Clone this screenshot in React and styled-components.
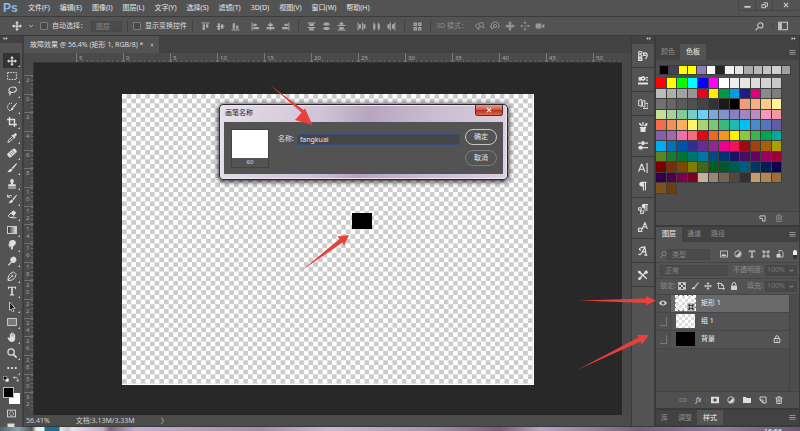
import React, { useState } from 'react'
import styled, { createGlobalStyle, css } from 'styled-components'

const GlobalStyle = createGlobalStyle`
	*, *::before, *::after {
		box-sizing: border-box;}

	body {
		margin: 0;
		background: #282828;
		color: #dcdcdc;
		font-family: 'Noto Sans', 'Noto Sans CJK SC', sans-serif;
		font-size: 7px;
		line-height: 10px;}

	button, input, select {
		font: inherit;
		color: inherit;
		margin: 0;
		padding: 0;
		border: 0;
		background: none;}
`;

/* ---------- Icons ---------- */

const line = { fill: 'none', stroke: 'currentColor', strokeWidth: 1.6 };

const icons = {
	move: <path d='M8 0l3 3.5H9V7h3.500V5L16 8l-3.500 3V9H9v3.500h2L8 16l-3-3.500h2V9H3.500v2L0 8l3.500-3v2H7V3.500H5z' />,
	marquee: <rect x='1' y='2.500' width='14' height='11' {...line} strokeDasharray='2.500 1.800' />,
	lasso: <g {...line}><ellipse cx='9' cy='6' rx='6' ry='4.300' transform='rotate(-12 9 6)' /><circle cx='4.500' cy='10.500' r='1.700' /><path d='M5 12c1 1 .5 2.500-1.500 3' /></g>,
	quickSelect: <g><path d='M8 2C4 1 1 4 1 8s2 6 5 6' {...line} strokeDasharray='2 1.300' /><path d='M15.500 1l.5 1-5 7-2-1.500zM8.500 8.200l2 1.800c-.5 2.500-2.500 4-5.500 3.500 1.500-1 1.500-4 3.500-5.300z' /></g>,
	crop: <path d='M4 0v12h12M0 4h12v12' {...line} strokeWidth='2.200' />,
	eyedropper: <g><path d='M12 1c2-2 5 1 3 3l-2.500 2.500 1 1-1.500 1.500-5-5L8.500 2.500l1 1z' /><path d='M8 6l-5.500 5.500L1.500 15l3-1L10 8.300' {...line} /></g>,
	heal: <g transform='rotate(-40 8 8)'><rect x='0' y='4' width='16' height='8' rx='3' /><path d='M5 4v8M11 4v8M7 7h2M7 9h2' stroke='#535353' fill='none' /></g>,
	brush: <path d='M15 0l1 1-6.500 9L7.500 8zM6.800 8.800l2 2c-.5 3-4 4.500-8.300 3.700 2-1 2.500-5 6.300-5.700z' />,
	stamp: <path d='M8 0a3 3 0 0 1 3 3c0 2-1.500 3-1.500 5.500H14V12H2V8.500h4.500C6.500 6 5 5 5 3a3 3 0 0 1 3-3zM1.500 13.500h13V15h-13z' />,
	historyBrush: <g><path d='M15 1l1 1-5.500 8-2-2zM7.800 8.800l2 2c-.5 3-3.500 4.500-7.300 3.700 2-1 2-5 5.300-5.700z' /><path d='M1 1v4h4M1.500 4.500C4 2 6 2 8 3.500' {...line} /></g>,
	eraser: <g><path d='M10 2l5 4-4 4.500-5-4z' /><path d='M6 6.500l5 4-2.500 3H4.500L2 11z' {...line} /><path d='M8 14h7' {...line} /></g>,
	smudge: <path d='M5 1c3-1.500 8-1 9 2s-1 6-4 7l-1 5H6l1-5-3 2-1-1 2-3-3 1V7l3-1.500L3 5l.5-2z' />,
	dodge: <path d='M10 1a5 5 0 1 1-2.500 9.300L3 15.500 1.500 14 6.300 9A5 5 0 0 1 10 1z' />,
	pen: <g><path d='M10 1l5 5-1.500 1.500c0 4-3 6-7.500 7.500H1.500L2 10c1-4 3-6.500 7-7.500z' {...line} /><path d='M2 14.500L7.500 8.500' {...line} /><circle cx='8.500' cy='7.500' r='1.500' /></g>,
	type: <path d='M1.500 1h13v4h-1.300c-.2-1.500-.7-2.200-2.200-2.200H9.300V13l2.200.7V15h-7v-1.300l2.200-.7V2.800H5C3.500 2.800 3 3.500 2.800 5H1.500z' />,
	select: <g><path d='M4 0l9 10H9l2 5-2.500 1-2-5L4 13z' fill='#111' stroke='currentColor' strokeWidth='1.300' /></g>,
	rect: <rect x='1' y='2.500' width='14' height='11' fill='#777' stroke='currentColor' strokeWidth='1.300' />,
	hand: <path d='M4.500 9V3.500c0-1.300 1.700-1.300 1.700 0V7h.5V1.500c0-1.500 1.800-1.500 1.800 0V7H9V2c0-1.400 1.800-1.400 1.800 0v5.500h.5V4c0-1.300 1.700-1.300 1.700 0v6c0 4-2 6-5 6-3.500 0-4.500-2-7-6-.6-1.300.8-2 1.700-1z' />,
	zoom: <g {...line} strokeWidth='2'><circle cx='6.500' cy='6.500' r='5' /><path d='M10 10l5.500 5.500' strokeWidth='2.800' /></g>,
	more: <g><circle cx='2' cy='8' r='1.800' /><circle cx='8' cy='8' r='1.800' /><circle cx='14' cy='8' r='1.800' /></g>,
	mask: <g><rect x='1' y='2' width='14' height='12' {...line} /><circle cx='8' cy='8' r='3.500' {...line} strokeDasharray='2 1' /></g>,
	screen: <path d='M1 1h14v9H1z' />,
	alignTop: <path d='M1 1h14v1.800H1zM3 4h4v10H3zM9 4h4v6H9z' />,
	alignMid: <path d='M3 2h4v5h2V4h4v3h2v1.800h-2V12H9V8.800H7V14H3V8.800H1V7h2z' />,
	alignBottom: <path d='M3 2h4v10H3zM9 6h4v6H9zM1 13.200h14V15H1z' />,
	alignLeft: <path d='M1 1h1.800v14H1zM4 3h6v4H4zM4 9h10v4H4z' />,
	alignCenter: <path d='M7 1h1.800v2H12v4H8.800v2H15v4H8.800v2H7v-2H1V9h6V7H4V3h3z' />,
	alignRight: <path d='M13.200 1H15v14h-1.800zM6 3h6v4H6zM2 9h10v4H2z' />,
	distTop: <path d='M1 1h14v1.600H1zM4 3h8v4H4zM1 9h14v1.600H1zM4 11h8v4H4z' />,
	distMid: <path d='M4 1h8v2h3v1.500h-3V6H4V4.500H1V3h3zM4 9h8v2h3v1.500h-3V14H4v-1.500H1V11h3z' />,
	distBottom: <path d='M5 1h6v4H5zM1 5.500h14V7H1zM4 9h8v4H4zM1 13.500h14V15H1z' />,
	distLeft: <path d='M1 1h1.800v14H1zM3.500 4H7v8H3.500zM9 1h1.800v14H9zM11.500 4H15v8h-3.500z' />,
	distCenter: <path d='M2 4h1V1h1.600v3H6v8H4.600v3H3v-3H2zM10 4h1V1h1.600v3H14v8h-1.400v3H11v-3h-1z' />,
	distRight: <path d='M1 4h3.500v8H1zM5 1h1.800v14H5zM9 4h3.500v8H9zM13 1h1.800v14H13z' />,
	autoAlign: <path d='M1 1h6v6H1zM9 1h6v6H9zM1 9h6v6H1zM9 9h6v6H9zM3 3v2h2V3zM11 3v2h2V3zM3 11v2h2v-2zM11 11v2h2v-2z' fillRule='evenodd' />,
	orbit: <g {...line}><circle cx='10' cy='6' r='3.500' /><path d='M5 4C-1 6 0 11 6 12M5 9.500L7 12l-2.500 2M12 11l3-1' /></g>,
	roll: <g {...line}><circle cx='8' cy='8' r='2.500' /><path d='M3 12a6.500 6.500 0 1 1 10 0M1 9l2 3.500 3-2' /></g>,
	slide: <g><path d='M8 0l3 4H9v3h3V5l4 3-4 3V9H9v3h2l-3 4-3-4h2V9H4v2L0 8l4-3v2h3V4H5z' /><circle cx='8' cy='8' r='3' /></g>,
	scatter: <path d='M8 0l2.500 4h-5zM8 16l2.500-4h-5zM0 8l4-2.500v5zM16 8l-4-2.500v5zM7 7h2v2H7z' />,
	camera: <path d='M1 4h9v8H1zM11 7l4-3v8l-4-3z' />,
	search: <g {...line} strokeWidth='1.800'><circle cx='9.500' cy='6' r='4.700' /><path d='M6 9.500L1 15' /></g>,
	workspace: <g><rect x='1' y='2' width='14' height='12' {...line} /><path d='M2 3h4v10H2z' /></g>,
	minimize: <path d='M1 9h14v4H1z' />,
	restore: <path d='M6 2h9v8h-4M2 6h8v7H2z' {...line} strokeWidth='2.200' />,
	close: <path d='M2.500 2.500l11 11M13.500 2.500l-11 11' {...line} strokeWidth='2.800' />,
	chevron: <path d='M3 5.500l5 5 5-5' {...line} strokeWidth='2' />,
	history: <g><path d='M1 1h5v3.500H1zM1 6h5v3.500H1zM1 11h5v4H1z' {...line} /><path d='M1 11h5v4H1zM9 2v5h4' {...line} strokeWidth='1.800' /><path d='M9 4c5-4 8 3 3 9' {...line} strokeWidth='2' /></g>,
	properties: <g><path d='M1 3h4v6H1zM8 1.500l4 2v4l-4 2-4-2v-4zM13 3h3v2h-3zM13 7h3v2h-3zM0 12h16v3H0z' /><circle cx='8' cy='5.500' r='1.300' fill='#535353' /></g>,
	clone: <g {...line}><path d='M1 2l5-1v11l-5-2zM7 4l4-2v11l-4-2zM12 7h4v8H8' /></g>,
	brushes: <path d='M3 8h10v2h-1v6H4v-6H3zM6 7L2 4 1 1l3 1 3 4zM7 6V0h2v6zM10 7l1-4 4-2v4l-3 2z' />,
	presets: <path d='M0 4h6V2h4v2h6v2h-6v2H6V6H0zM0 11h2V9h5v2h9v2H7v2H2v-2H0z' />,
	character: <g {...line} strokeWidth='1.800'><path d='M1 14L5.500 2h1L11 14M3 10h6M14.500 0v16' /></g>,
	paragraph: <path d='M6 1h8v1.800h-1.200V15H11V2.800H9.500V15H7.700V9C4.500 9 2 7.500 2 5s1.800-4 4-4z' />,
	paraStyles: <g><path d='M9 0h7v1.500h-1V11h-1.500V1.500H12V11h-1.500V7C8 7 6 6 6 3.500S7.300 0 9 0z' /><path d='M1 6h4v4H1zM4 11h5v4H4z' {...line} /></g>,
	charStyles: <g {...line}><path d='M7 11L11 1l4 10M8.500 8h5M1 10h5v5H1z' strokeWidth='1.800' /></g>,
	glyphs: <path d='M1 12.500c1 2 3 1.500 4.500-1L11 2l2 12M4 3c-3 2-1 4.500 1 3M4 3c3-2 5-1 8-1M6 9.500h7M10 14.500h5' {...line} strokeWidth='1.900' />,
	toolPresets: <g><path d='M1 2l13 12M2 14L13 3' {...line} strokeWidth='2' /><circle cx='13' cy='3.500' r='2.600' /><path d='M0 1l4 1 2 4-2 1-4-3zM1 12l3-1 2 2-3 3-3-1z' /></g>,
	newItem: <path d='M2 2h12v12H8V8H2z' {...line} strokeWidth='2' />,
	newLayer: <path d='M2 2h12v12H8L2 8zM2 8h6v6' {...line} strokeWidth='1.800' />,
	trash: <path d='M1 4h14M5.500 4V1.500h5V4M3 4l.5 11h9L13 4M6 6.500v6M8 6.500v6M10 6.500v6' {...line} />,
	image: <g><rect x='1' y='2' width='14' height='12' {...line} /><path d='M3 12l3-5 2.500 3L10 8l3 4z' /></g>,
	adjust: <g><circle cx='8' cy='8' r='6.500' {...line} /><path d='M3.500 12.500a6.500 6.500 0 0 0 9-9z' /></g>,
	shape: <path d='M4 4h8v8H4zM1.500 1.500h3v3h-3zM11.500 1.500h3v3h-3zM1.500 11.500h3v3h-3zM11.500 11.500h3v3h-3z' {...line} />,
	smart: <g><path d='M6 1h5l3 3v10H6z' {...line} /><path d='M1 8h8v7H1z' /></g>,
	pixels: <g><rect x='1' y='1' width='14' height='14' {...line} /><path d='M2 2h4v4H2zM10 2h4v4h-4zM6 6h4v4H6zM2 10h4v4H2zM10 10h4v4h-4z' /></g>,
	lock: <g><path d='M2 7h12v9H2z' /><path d='M4.500 7V4.500a3.500 3.500 0 0 1 7 0V7' {...line} strokeWidth='2' /></g>,
	lockOpen: <g {...line}><path d='M2.500 7h11v8h-11zM5 7V4.500a3 3 0 0 1 6 0V7M8 10v3' /></g>,
	artboard: <path d='M3 0v13h13M0 3h9l4 4v9M9 3v4h4' {...line} strokeWidth='1.800' />,
	eye: <path d='M8 3c4 0 7 3 8 5-1 2-4 5-8 5s-7-3-8-5c1-2 4-5 8-5zm0 2a3 3 0 1 0 0 6 3 3 0 0 0 0-6z' fillRule='evenodd' />,
	link: <path d='M7 5H4a3 3 0 0 0 0 6h3M9 5h3a3 3 0 0 1 0 6H9M5 8h6' {...line} />,
	maskAdd: <path d='M0 1.500h16v13H0zM8 4.500a3.500 3.500 0 1 0 0 7 3.500 3.500 0 0 0 0-7z' fillRule='evenodd' />,
	folder: <path d='M0 2h6l1.500 2H16v10H0z' />,
	menu: <path d='M1 3h14v1.800H1zM1 7h14v1.800H1zM1 11h14v1.800H1z' />,
	swap: <path d='M4 1L1 4l3 3M1 4h8c3 0 3.500 2 3.500 9M9.500 10.500l3 4 3-4' {...line} strokeWidth='2' />,
	resetColors: <g><path d='M7 7h8v8H7z' fill='#fff' /><path d='M1 1h9v9H1z' fill='#000' stroke='#ddd' strokeWidth='1.600' /></g>,
	collapse: <path d='M7 3v10L1 8zM14 3v10L8 8z' />,
	expand: <path d='M2 3v10l6-5zM9 3v10l6-5z' />,
};

const Svg = styled.svg`
	display: block;
	flex: none;
	width: ${p => p.$size}px;
	height: ${p => p.$size}px;
	fill: currentColor;
`;

const Icon = ({ name, size = 9 }) => (
	<Svg viewBox='0 0 16 16' $size={size} aria-hidden='true'>{icons[name]}</Svg>
)

const IconButton = styled.button`
	display: flex;
	align-items: center;
	justify-content: center;
	flex: none;
	width: ${p => p.$w || 15}px;
	color: ${p => p.$color || '#cfcfcf'};
`;

const Gradient = styled.span`
	width: 10px;
	height: 8px;
	border: 1px solid #ccc;
	background: linear-gradient(to right, #333, #ddd);
`;

/* ---------- Frame ---------- */

const Frame = styled.div`
	position: relative;
	display: grid;
	grid-template-rows: 17px 19px minmax(0, 1fr) 4px;
	height: 100vh;
	overflow: hidden;
`;

const MenuBar = styled.header`
	display: flex;
	align-items: center;
	background: #535353;
	border-bottom: 1px solid #3c3c3c;
	white-space: nowrap;

	.logo {
		width: 28px;
		padding-left: 3px;
		color: #8ab8e6;
		font: bold 12px/16px 'Liberation Sans', sans-serif;}

	nav {
		display: flex;
		flex: 1;
		gap: 10px;}

	nav button {
		color: #e8e8e8;}
`;

const WindowButtons = styled.div`
	display: flex;
	align-self: flex-start;
	height: 11px;
	padding-right: 2px;

	button {
		border: 1px solid #464646;
		border-width: 0 0 1px 1px;}
`;

const OptionsBar = styled.div`
	display: flex;
	align-items: center;
	background: #535353;
	border-bottom: 1px solid #3a3a3a;
	white-space: nowrap;
	padding-left: 12px;

	label {
		display: flex;
		align-items: center;
		gap: 4px;}

	.auto {
		margin-right: 4px;}

	.dim {
		color: #8a8a8a;
		margin-right: 5px;}

	.end {
		display: flex;
		margin-left: auto;
		padding-right: 12px;}
`;

const AlignGroup = styled.div`
	display: flex;

	& + & {
		margin-left: 5px;}
`;

const Separator = styled.span`
	align-self: stretch;
	width: 1px;
	margin: 3px 5px;
	background: #434343;
`;

const Check = styled.input.attrs({ type: 'checkbox' })`
	appearance: none;
	width: 8px;
	height: 8px;
	border: 1px solid #7c7c7c;
	border-radius: 1px;
	background: #484848;
	&:checked {
		background: #ccc;}
`;

const Dropdown = styled.select`
	appearance: none;
	width: ${p => p.$w}px;
	height: 11px;
	padding: 0 4px;
	border: 1px solid #474747;
	background: #4b4b4b;
	color: #858585;
	line-height: 9px;
`;

const Body = styled.main`
	display: flex;
	min-height: 0;
	background: #424242;
`;

/* ---------- Tools ---------- */

const Toolbar = styled.aside`
	display: flex;
	flex-direction: column;
	flex: none;
	width: 24px;
	border-right: 2px solid #3e3e3e;
	background: #535353;
	overflow: hidden;

	.head {
		height: 7px;
		padding-left: 3px;
		background: #424242;
		color: #ccc;}

	.grip {
		height: 10px;}
`;

const ToolList = styled.div`
	display: flex;
	flex-direction: column;
	flex: 1;
	min-height: 0;
`;

const Tool = styled.button`
	position: relative;
	display: flex;
	align-items: center;
	justify-content: center;
	flex: 1;
	min-height: 0;
	width: 17px;
	margin-left: 3px;
	color: #dedede;
	background: ${p => p.$active ? '#333' : 'none'};

	&::after {
		content: '';
		position: absolute;
		right: 0;
		bottom: 1px;
		border: 1px solid transparent;
		border-right-color: #ccc;
		border-bottom-color: #ccc;}
`;

const ColorPicker = styled.div`
	display: grid;
	justify-items: center;
	align-content: start;
	gap: 5px;
	flex: none;
	height: 51px;
	overflow: hidden;
	color: #ddd;

	.mini {
		display: flex;
		gap: 4px;}

	.chips {
		position: relative;
		width: 17px;
		height: 17px;}

	.chip {
		position: absolute;
		width: 11px;
		height: 11px;
		right: 0;
		bottom: 0;
		background: #fff;}

	.chip.front {
		left: 0;
		top: 0;
		background: #000;
		border: 1px solid #bbb;}
`;

/* ---------- Document ---------- */

const Doc = styled.section`
	display: grid;
	grid-template-columns: 10px minmax(0, 1fr) 9px;
	grid-template-rows: 17px 10px minmax(0, 1fr) 11px;
	flex: 1;
	min-width: 0;
	background: #494949;
	border-bottom: 1px solid #3a3a3a;
`;

const TabStrip = styled.div`
	grid-column: 1 / -1;
	display: flex;
	background: #424242;

	.tab {
		display: flex;
		align-items: center;
		gap: 6px;
		padding: 0 5px 0 6px;
		background: #535353;
		color: #dedede;
		white-space: nowrap;}
`;

const RulerX = styled.div`
	display: flex;
	padding-left: 42px;
	overflow: hidden;
	background: #4a4a4a;
	border-bottom: 1px solid #333;

	span {
		flex: none;
		width: 47px;
		padding-left: 2px;
		border-left: 1px solid #777;
		color: #a8a8a8;
		font-size: 6px;
		line-height: 10px;
		background: repeating-linear-gradient(to right, #666 0 1px, transparent 1px 5px) bottom / 100% 2px no-repeat;}
`;

const RulerY = styled.div`
	display: flex;
	flex-direction: column;
	padding: 12px 0 4px;
	overflow: hidden;
	background: #4a4a4a;
	border-right: 1px solid #333;

	span {
		display: flex;
		flex-direction: column;
		flex: 1;
		min-height: 0;
		padding: 1px 0 0 2px;
		border-top: 1px solid #707070;
		color: #a0a0a0;
		font-size: 6px;
		line-height: 7px;
		background: repeating-linear-gradient(to bottom, #666 0 1px, transparent 1px 4px) right / 2px 100% no-repeat;}

	b {
		font-weight: normal;}
`;

const Pasteboard = styled.div`
	position: relative;
	padding: 31px 88px 30px;
	background: #282828;
`;

const Canvas = styled.div`
	position: relative;
	height: 100%;
	border: 1px solid #fff;
	border-width: 0 1px 1px 0;
	background: conic-gradient(#cbcbcb 25%, #fff 0 50%, #cbcbcb 0 75%, #fff 0);
	background-size: calc(100% / 44) calc(100% / 31);

	.square {
		position: absolute;
		left: 56%;
		top: 41%;
		width: 20px;
		height: 16px;
		background: #000;}
`;

const StatusBar = styled.div`
	grid-column: 1 / -1;
	display: flex;
	align-items: center;
	gap: 26px;
	padding-left: 2px;
	background: #4b4c4a;
	color: #d0d0d0;
	white-space: nowrap;
`;

/* ---------- Dialog ---------- */

const Dialog = styled.form`
	position: absolute;
	left: 185px;
	top: 41px;
	width: 289px;
	padding: 0 4px 5px;
	border: 1px solid #2b2530;
	border-radius: 4px;
	background: linear-gradient(100deg, #e6dfe9, #cfc3d6 35%, #b7a5bf 50%, #c9bad0 70%, #ddd0e0);
	box-shadow: 0 1px 5px 1px rgba(0, 0, 0, .75), inset 0 0 0 1px #eee6f0;

	header {
		display: flex;
		justify-content: space-between;
		height: 17px;}

	h2 {
		margin: 3px 0 0 1px;
		color: #1c1820;
		font-size: 7px;
		line-height: 10px;
		font-weight: normal;}
`;

const CloseButton = styled.button`
	display: flex;
	align-items: center;
	justify-content: center;
	width: 28px;
	height: 11px;
	color: #fff;
	border: 1px solid #5d2a24;
	border-top: 0;
	border-radius: 0 0 3px 3px;
	background: linear-gradient(#e5a391, #d0503c 50%, #c03020 55%, #dc6c4c);
`;

const DialogBody = styled.div`
	display: flex;
	align-items: flex-start;
	padding: 7px 6px 6px 7px;
	background: #535353;

	label {
		margin: 5px 3px 0 9px;
		color: #e0e0e0;}

	input {
		flex: 1;
		min-width: 0;
		height: 11px;
		margin-top: 5px;
		padding: 0 2px;
		border: 1px solid #33507a;
		background: #454545;
		color: #e6e6e6;
		outline: 0;}

	.actions {
		display: grid;
		gap: 5px;
		margin-left: 5px;}
`;

const BrushPreview = styled.figure`
	width: 38px;
	margin: 0;
	border: 1px solid #434343;
	text-align: center;
	font-size: 6px;
	line-height: 9px;

	&::before {
		content: '';
		display: block;
		height: 28px;
		background: #fff;}
`;

const PillButton = styled.button`
	width: 32px;
	height: 16px;
	border: 1px solid ${p => p.$primary ? '#c6c6c6' : '#7c7c7c'};
	border-radius: 8px;
	color: #e4e4e4;
	line-height: 12px;
`;

/* ---------- Panels ---------- */

const Dock = styled.aside`
	display: flex;
	flex-direction: column;
	flex: none;
	width: 25px;
	border: solid #3a3a3a;
	border-width: 0 2px 1px 1px;
	background: #535353;

	.head {
		display: flex;
		justify-content: flex-end;
		height: 8px;
		padding-right: 3px;
		background: #424242;
		color: #ccc;}
`;

const DockGroup = styled.div`
	display: flex;
	flex-direction: column;
	justify-content: space-around;
	height: ${p => p.$count > 1 ? 41 : 24}px;
	border-bottom: 1px solid #3c3c3c;
	padding: 2px 0;

	button {
		width: 100%;}
`;

const Panels = styled.aside`
	display: flex;
	flex-direction: column;
	flex: none;
	width: 144px;
	padding: 0 1px 2px 0;
	background: #3a3a3a;

	.head {
		display: flex;
		justify-content: flex-end;
		height: 8px;
		padding-right: 3px;
		background: #424242;
		color: #ccc;}
`;

const Panel = styled.section`
	display: flex;
	flex-direction: column;
	background: #4d4d4d;
	${p => p.$grow && css`
		flex: 1;
		min-height: 0;
		margin-block: 2px;
	`}
`;

const Tabs = styled.div`
	display: flex;
	height: ${p => p.$h}px;
	background: #424242;

	button {
		padding-inline: 5px;
		color: #8c8c8c;}

	button.active {
		padding-inline: 6px;
		background: #535353;
		color: #f0f0f0;}

	button:last-child {
		margin-left: auto;
		padding: 0;
		color: #aaa;}
`;

const Recent = styled.div`
	display: grid;
	grid-template-columns: repeat(14, 1fr);
	gap: 1px;
	margin: 5px 8px 0 3px;
	padding: 1px;
	background: #3c3c3c;
`;

const RecentSwatch = styled.button`
	height: 8px;
	background: ${p => p.$color};
`;

const Swatches = styled.div`
	display: grid;
	grid-template-columns: repeat(12, 1fr);
	margin: 3px 17px 0 0;
	padding-bottom: 17px;
`;

const Swatch = styled.button`
	aspect-ratio: 1;
	border: solid #3f3f3f;
	border-width: 0 1px 1px 0;
	background: ${p => p.$color};
`;

const PanelFooter = styled.footer`
	display: flex;
	align-items: center;
	justify-content: flex-end;
	gap: 1px;
	height: ${p => p.$h}px;
	padding-right: 13px;
	border-top: 1px solid #424242;
	background: #505050;
`;

const LayerOptions = styled.div`
	padding-top: 5px;
	background: #535353;
`;

const PanelRow = styled.div`
	display: flex;
	align-items: center;
	height: 16px;
	padding-inline: 4px 2px;
	border-bottom: 1px solid #464646;
	color: #8c8c8c;
	white-space: nowrap;

	.push {
		margin-left: auto;}

	.amount {
		display: flex;
		align-items: center;
		width: 32px;
		height: 11px;
		margin-left: 2px;
		border: 1px solid #454545;
		background: #484848;}

	.amount input {
		width: 21px;
		padding-left: 1px;
		color: #777;
		border-right: 1px solid #404040;}
`;

const Toggle = styled.button`
	width: 4px;
	height: 9px;
	margin-left: 6px;
	border-radius: 2px;
	background: linear-gradient(#eee 50%, #333 0);
`;

const LayerList = styled.ul`
	flex: 1;
	min-height: 0;
	margin: 0 9px 0 0;
	padding: 0;
	list-style: none;
	border-right: 1px solid #434343;
`;

const Layer = styled.li`
	display: flex;
	align-items: center;
	height: 18px;
	border-bottom: 1px solid #474747;
	background: ${p => p.$active ? '#6a6a6a' : '#535353'};
	color: #eee;

	.eye {
		align-self: stretch;
		background: #505050;
		border-right: 1px solid #484848;}

	.box {
		width: 7px;
		height: 9px;
		border: solid #777;
		border-width: 0 1px 1px 0;}

	.lock {
		margin: 0 8px 0 auto;}
`;

const Thumb = styled.span`
	position: relative;
	width: 19px;
	height: 14px;
	margin: 0 6px 0 5px;
	background: ${p => p.$solid ? '#000' : 'conic-gradient(#fff 25%, #ddd 0 50%, #fff 0 75%, #ddd 0) 0 0 / 6px 6px'};
	outline: ${p => p.$active ? '1px dashed #fff' : '0'};
	color: #111;

	.badge {
		position: absolute;
		right: 0;
		bottom: -1px;
		padding: 1px;
		background: #bbb;}
`;

const Taskbar = styled.footer`
	display: flex;
	justify-content: flex-end;
	overflow: hidden;
	background: linear-gradient(to right, #54606a, #8ba6ad 18px, #55575a 32px, #e4eaec 36px, #e8f2f5 44px, #1b6f8c 45px, #1b6f8c 59px, #e8e4ec 60px, #c9c2cc 68px, #e8e0ea 72px, #c0b2c4 103px, #80667f 110px, #c4afd0 135px, #a58cab 260px, #c9bad6 330px, #a695b0 430px, #7e5c78 500px, #b9a5c5 540px, #75607c 640px, #937da0 720px, #695672);
	color: #fff;

	time {
		margin-right: 18px;}
`;

const Arrows = styled.svg`
	position: absolute;
	inset: 0;
	width: 100%;
	height: 100%;
	pointer-events: none;
	fill: #e8403a;
`;

/* ---------- Data ---------- */

const menus = ['文件(F)', '编辑(E)', '图像(I)', '图层(L)', '文字(Y)', '选择(S)', '滤镜(T)', '3D(D)', '视图(V)', '窗口(W)', '帮助(H)'];

const tools = ['move', 'marquee', 'lasso', 'quickSelect', 'crop', 'eyedropper', 'heal', 'brush', 'stamp', 'historyBrush', 'eraser', 'gradient', 'smudge', 'dodge', 'pen', 'type', 'select', 'rect', 'hand', 'zoom', 'more'];

// a separator goes in front of each section
const alignSections = [
	[['alignTop', 'alignMid', 'alignBottom'], ['alignLeft', 'alignCenter', 'alignRight']],
	[['distTop', 'distMid', 'distBottom'], ['distLeft', 'distCenter', 'distRight']],
	[['autoAlign']],
];

const dockGroups = [['history'], ['properties'], ['clone'], ['brushes', 'presets'], ['character', 'paragraph'], ['paraStyles', 'charStyles'], ['glyphs'], ['toolPresets']];

const rulerX = [5, 0, 5, 10, 15, 20, 25, 30, 35, 40, 45, 50];
const rulerY = [2, 0, 2, 4, 6, 8, 10, 12, 14, 16, 18, 20, 22, 24, 26, 28, 30, 32];

const recentColors = '000 45424f ff0 ff0 8d80b8 fff 252525 f2f2f2 e4e4e4 aaa b8b8b8 c4c4c4 d0d0d0 a0a0a0'.split(' ');

const swatchColors = `
	f00 ff0 0f0 0ff 00f f0f fff eee e6e6e6 ddd d3d3d3 c8c8c8
	bbb aeaeae a2a2a2 969696 e3061b ffed00 009846 009fe3 1f1c88 e2007a 8a8a8a 7e7e7e
	717171 666 5a5a5a 505050 444 333 1a1a1a 000 f29b7e f6b083 fbcb8c fff799
	c4df9b a3d39c 82ca9c 7accc8 6dcff6 7da7d9 8393ca 8781bd a186be bd8cbf f49ac1 f5989d
	f26c4f f68e56 fbaf5d fff568 acd373 7cc576 3cb878 1cbbb4 00bff3 448ccb 5674b9 605ca8
	855fa8 a864a8 f06eaa f26d7d e3061b f26522 f7941d fff200 8dc63f 39b54a 00a651 00a99d
	00aeef 0072bc 0054a6 2e3192 662d91 92278f ec008c ed145b 9e0b0f a0410d a36209 aba000
	598527 1a7b30 007236 00746b 0076a3 004b80 003471 1b1464 440e62 630460 9e005d 9e0039
	790000 7b2e00 7d4900 827b00 406618 005e20 005826 005952 005b7f 003663 002157 0d004c
	32004b 4b0049 7b0046 7a0026 c7b299 998675 736357 534741 333030 c69c6d b28850 9c6d3c
	80501c 6b3f0a
`.trim().split(/\s+/);

const layers = [
	{ name: '矩形 1', visible: true, shape: true },
	{ name: '组 1' },
	{ name: '背景', solid: true, locked: true },
];

const lockIcons = ['pixels', 'brush', 'move', 'artboard', 'lock'];
const filterIcons = ['image', 'adjust', 'type', 'shape', 'smart'];
const layerActions = ['link', 'fx', 'maskAdd', 'adjust', 'folder', 'newLayer', 'trash'];

/* ---------- Parts ---------- */

const Options = () => (
	<OptionsBar>
		<Icon name='move' size={10} />
		<IconButton $w={18} aria-label='工具预设'><Icon name='chevron' size={6} /></IconButton>
		<label className='auto'><Check />自动选择：</label>
		<Dropdown $w={31} aria-label='自动选择'>
			<option>图层</option>
		</Dropdown>
		<Separator />
		<label><Check />显示变换控件</label>
		{ alignSections.map( (section, index) => (
			<React.Fragment key={index}>
				<Separator />
				{ section.map( (group) => (
					<AlignGroup key={group[0]}>
						{ group.map( (name) => (
							<IconButton key={name} aria-label={name} $color='#a9a9a9'><Icon name={name} /></IconButton>
						))}
					</AlignGroup>
				))}
			</React.Fragment>
		))}
		<Separator />
		<span className='dim'>3D 模式：</span>
		{ ['orbit', 'roll', 'slide', 'scatter', 'camera'].map( (name) => (
			<IconButton key={name} aria-label={name} $color='#979797'><Icon name={name} size={10} /></IconButton>
		))}
		<div className='end'>
			<IconButton aria-label='搜索'><Icon name='search' /></IconButton>
			<Separator />
			<IconButton $w={10} aria-label='工作区'><Icon name='workspace' size={10} /></IconButton>
		</div>
	</OptionsBar>
)

const BrushDialog = () => {
	const [name, setName] = useState('fangkuai');

	return (
		<Dialog onSubmit={(e) => e.preventDefault()}>
			<header>
				<h2>画笔名称</h2>
				<CloseButton type='button' aria-label='关闭'><Icon name='close' size={6} /></CloseButton>
			</header>
			<DialogBody>
				<BrushPreview>60</BrushPreview>
				<label htmlFor='brush-name'>名称:</label>
				<input id='brush-name' value={name} onChange={(e) => setName(e.target.value)} />
				<div className='actions'>
					<PillButton $primary>确定</PillButton>
					<PillButton type='button'>取消</PillButton>
				</div>
			</DialogBody>
		</Dialog>
	)
}

const PanelTabs = ({ names, active, h }) => (
	<Tabs $h={h}>
		{ names.map( (name) => (
			<button key={name} className={name === active ? 'active' : ''}>{name}</button>
		))}
		<IconButton $w={13} aria-label='面板菜单'><Icon name='menu' size={7} /></IconButton>
	</Tabs>
)

const SwatchPanel = () => (
	<Panel>
		<PanelTabs names={['颜色', '色板']} active='色板' h={16} />
		<Recent>
			{ recentColors.map( (color, index) => (
				<RecentSwatch key={index} $color={`#${color}`} aria-label={`#${color}`} />
			))}
		</Recent>
		<Swatches>
			{ swatchColors.map( (color, index) => (
				<Swatch key={index} $color={`#${color}`} aria-label={`#${color}`} />
			))}
		</Swatches>
		<PanelFooter $h={14}>
			<IconButton aria-label='新建色板'><Icon name='newItem' size={7} /></IconButton>
			<IconButton aria-label='删除色板' $color='#8a8a8a'><Icon name='trash' size={8} /></IconButton>
		</PanelFooter>
	</Panel>
)

const Amount = ({ label, id }) => (
	<>
		<label className='push' htmlFor={id}>{label}</label>
		<span className='amount'>
			<input id={id} defaultValue='100%' />
			<IconButton $w={9} type='button' aria-label={label}><Icon name='chevron' size={5} /></IconButton>
		</span>
	</>
)

const LayersPanel = () => {
	const [selected, setSelected] = useState(0);

	return (
		<Panel $grow>
			<PanelTabs names={['图层', '通道', '路径']} active='图层' h={15} />
			<LayerOptions>
				<PanelRow>
					<Icon name='search' size={7} />
					<Dropdown $w={43} aria-label='类型'>
						<option>类型</option>
					</Dropdown>
					<span className='push' />
					{ filterIcons.map( (name) => (
						<IconButton key={name} $w={14} aria-label={name}><Icon name={name} size={8} /></IconButton>
					))}
					<Toggle aria-label='滤镜开关' />
				</PanelRow>
				<PanelRow>
					<Dropdown $w={68} aria-label='混合模式'>
						<option>正常</option>
					</Dropdown>
					<Amount label='不透明度:' id='opacity' />
				</PanelRow>
				<PanelRow>
					<span>锁定:</span>
					{ lockIcons.map( (name) => (
						<IconButton key={name} $w={13} aria-label={name}><Icon name={name} size={8} /></IconButton>
					))}
					<Amount label='填充:' id='fill' />
				</PanelRow>
			</LayerOptions>
			<LayerList>
				{ layers.map( (layer, index) => (
					<Layer key={layer.name} $active={index === selected} onClick={() => setSelected(index)}>
						<IconButton className='eye' aria-label='可见性'>
							{ layer.visible ? <Icon name='eye' size={8} /> : <span className='box' /> }
						</IconButton>
						<Thumb $solid={layer.solid} $active={index === 0}>
							{ layer.shape && <span className='badge'><Icon name='shape' size={6} /></span> }
						</Thumb>
						<span>{layer.name}</span>
						{ layer.locked && <span className='lock'><Icon name='lockOpen' size={8} /></span> }
					</Layer>
				))}
			</LayerList>
			<PanelFooter $h={17}>
				{ layerActions.map( (name) => (
					<IconButton key={name} aria-label={name} $color={name === 'link' ? '#7d7d7d' : '#dcdcdc'}>
						{ name === 'fx' ? <em>fx</em> : <Icon name={name} size={8} /> }
					</IconButton>
				))}
			</PanelFooter>
		</Panel>
	)
}

const App = () => {
	const [tool, setTool] = useState('move');

	return (
		<Frame>
			<GlobalStyle />
			<MenuBar>
				<span className='logo'>Ps</span>
				<nav>
					{ menus.map( (item) => <button key={item}>{item}</button> )}
				</nav>
				<WindowButtons>
					<IconButton $w={17} aria-label='最小化'><Icon name='minimize' size={7} /></IconButton>
					<IconButton $w={17} aria-label='还原'><Icon name='restore' size={7} /></IconButton>
					<IconButton $w={26} aria-label='关闭'><Icon name='close' size={6} /></IconButton>
				</WindowButtons>
			</MenuBar>

			<Options />

			<Body>
				<Toolbar>
					<div className='head'><Icon name='expand' size={5} /></div>
					<div className='grip' />
					<ToolList>
						{ tools.map( (name) => (
							<Tool key={name} $active={name === tool} onClick={() => setTool(name)} aria-label={name}>
								{ name === 'gradient' ? <Gradient /> : <Icon name={name} size={10} /> }
							</Tool>
						))}
					</ToolList>
					<ColorPicker>
						<div className='mini'>
							<Icon name='resetColors' size={6} />
							<Icon name='swap' size={6} />
						</div>
						<div className='chips'>
							<button className='chip' aria-label='背景色' />
							<button className='chip front' aria-label='前景色' />
						</div>
						<Icon name='mask' size={9} />
						<Icon name='screen' size={8} />
					</ColorPicker>
				</Toolbar>

				<Doc>
					<TabStrip>
						<div className='tab'>
							<span>故障效果 @ 56.4% (矩形 1, RGB/8) *</span>
							<IconButton $w={5} aria-label='关闭'><Icon name='close' size={4} /></IconButton>
						</div>
					</TabStrip>
					<span />
					<RulerX>
						{ rulerX.map( (mark, index) => <span key={index}>{mark}</span> )}
					</RulerX>
					<span />
					<RulerY>
						{ rulerY.map( (mark, index) => (
							<span key={index}>
								{ String(mark).split('').map( (digit, i) => <b key={i}>{digit}</b> )}
							</span>
						))}
					</RulerY>
					<Pasteboard>
						<Canvas>
							<div className='square' />
						</Canvas>
						<BrushDialog />
					</Pasteboard>
					<span />
					<StatusBar>
						<span>56.41%</span>
						<span>文档:3.13M/3.33M</span>
						<span>〉</span>
					</StatusBar>
				</Doc>

				<Dock>
					<div className='head'><Icon name='collapse' size={5} /></div>
					{ dockGroups.map( (group) => (
						<DockGroup key={group[0]} $count={group.length}>
							{ group.map( (name) => (
								<IconButton key={name} aria-label={name} $color='#e2e2e2'><Icon name={name} size={10} /></IconButton>
							))}
						</DockGroup>
					))}
				</Dock>

				<Panels>
					<div className='head'><Icon name='expand' size={5} /></div>
					<SwatchPanel />
					<LayersPanel />
					<Panel>
						<PanelTabs names={['库', '调整', '样式']} active='样式' h={15} />
					</Panel>
				</Panels>
			</Body>

			<Taskbar>
				<time>16:56</time>
			</Taskbar>

			<Arrows viewBox='0 0 800 431' preserveAspectRatio='none' aria-hidden='true'>
				<path d='M270 85L301.500 112.500L299.500 115L295 120L312.500 125L305 108.500L303.500 110z' />
				<path d='M301 271L342.500 242.500L344 245.500L349 235L337.500 236.500L339.500 239z' />
				<path d='M579 300.500L646 298.500V296L656 300.500L646 305.500V303z' />
				<path d='M577 370L640.500 341.500L642 344.500L649 335L637 335L638.500 337.500z' />
			</Arrows>
		</Frame>
	)
}

export default App
